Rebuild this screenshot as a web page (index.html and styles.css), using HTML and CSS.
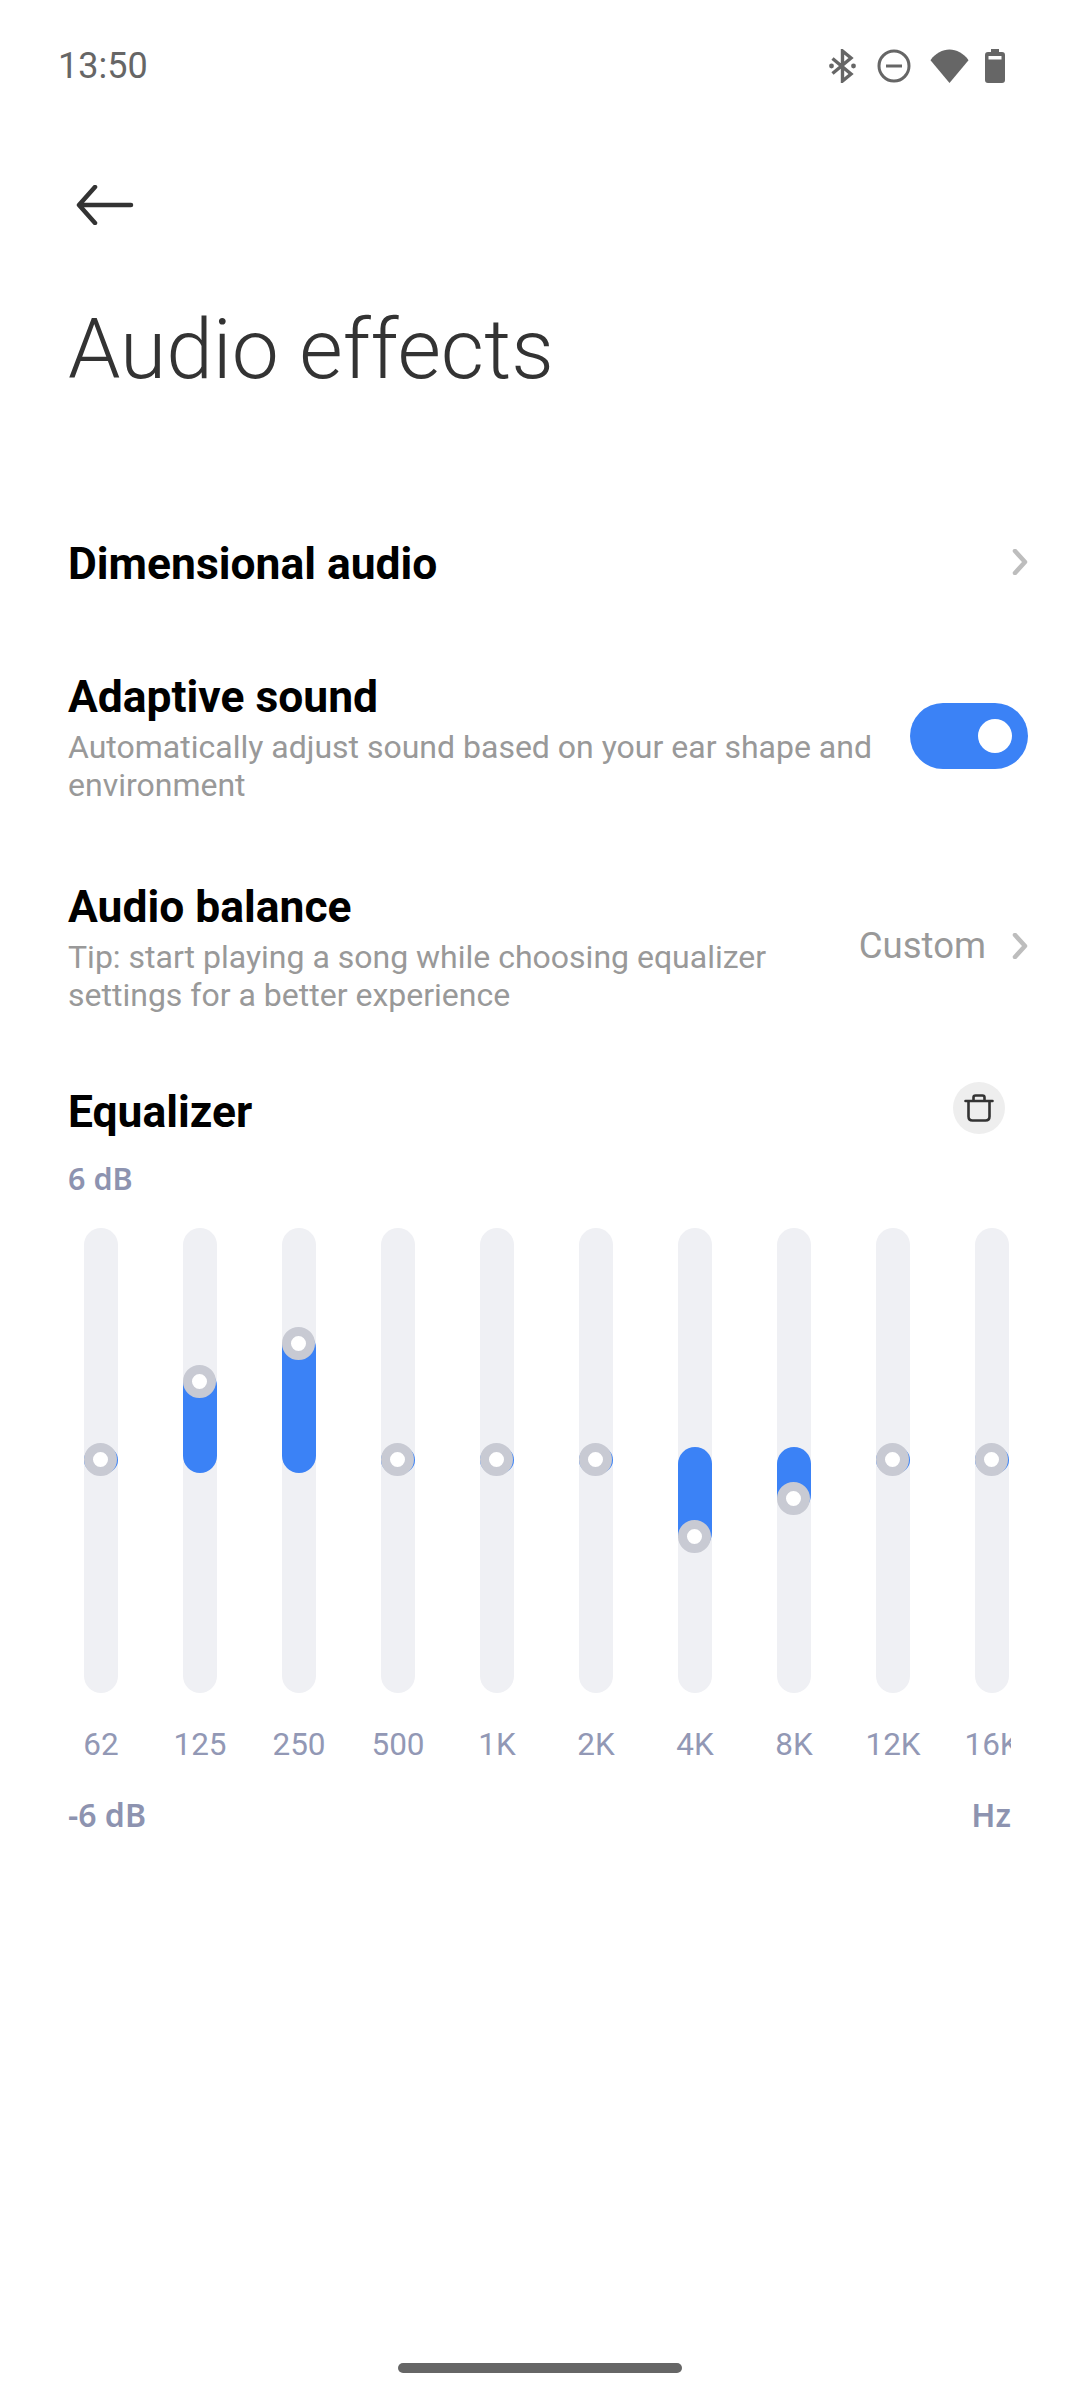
FILE: index.html
```html
<!DOCTYPE html>
<html lang="en">
<head>
    <meta charset="UTF-8">
    <meta name="viewport" content="width=device-width, initial-scale=1.0">
    <title>Audio effects</title>
    <link rel="stylesheet" href="styles.css">
</head>
<body>
    <div class="phone">
        <div class="status-bar">
            <span class="time">13:50</span>
            <div class="status-icons">
                <svg class="icon-bt" width="27" height="34" viewBox="0 0 27 34" fill="none" stroke="#666" stroke-width="3.4"><path d="M3.5 9.5 L22 25 L13.5 32 V2 L22 9 L3.5 24.5"/><circle cx="2.5" cy="17" r="2.4" fill="#666" stroke="none"/><circle cx="24.5" cy="17" r="2.4" fill="#666" stroke="none"/></svg>
                <svg class="icon-dnd" width="34" height="34" viewBox="0 0 34 34" fill="none" stroke="#666" stroke-width="3"><circle cx="17" cy="17" r="15"/><path d="M9 17 H25"/></svg>
                <svg width="39" height="36" viewBox="0 0 40 36" fill="#666"><path d="M0.5 12 C11 -2.5 29 -2.5 39.5 12 L20 35.5 Z"/></svg>
                <svg width="20" height="34" viewBox="0 0 20 34" fill="#666"><path d="M6 0 H14 V3 H17 Q20 3 20 6 V31 Q20 34 17 34 H3 Q0 34 0 31 V6 Q0 3 3 3 H6 Z M3.5 7 V10.5 H16.5 V7 Z" fill-rule="evenodd"/></svg>
            </div>
        </div>

        <div class="back-row">
            <svg width="58" height="40" viewBox="0 0 58 40" fill="none" stroke="#333" stroke-width="4.5" stroke-linecap="round" stroke-linejoin="round"><path d="M55 20 H4 M19 2 L3 20 L19 38"/></svg>
        </div>

        <h1>Audio effects</h1>

        <div class="row row-single">
            <div class="row-text">
                <h2>Dimensional audio</h2>
            </div>
            <svg class="chevron" width="16" height="26" viewBox="0 0 16 26" fill="none" stroke="#bdbdbd" stroke-width="4.5" stroke-linecap="round" stroke-linejoin="round"><path d="M3 2 L13 13 L3 24"/></svg>
        </div>

        <div class="row row-adaptive">
            <div class="row-text">
                <h2>Adaptive sound</h2>
                <p>Automatically adjust sound based on your ear shape and environment</p>
            </div>
            <div class="toggle"><span class="toggle-knob"></span></div>
        </div>

        <div class="row row-balance">
            <div class="row-text">
                <h2>Audio balance</h2>
                <p>Tip: start playing a song while choosing equalizer settings for a better experience</p>
            </div>
            <span class="row-value">Custom</span>
            <svg class="chevron" width="16" height="26" viewBox="0 0 16 26" fill="none" stroke="#bdbdbd" stroke-width="4.5" stroke-linecap="round" stroke-linejoin="round"><path d="M3 2 L13 13 L3 24"/></svg>
        </div>

        <div class="eq-head">
            <h2>Equalizer</h2>
            <div class="trash">
                <svg width="30" height="28" viewBox="0 0 30 28" fill="none" stroke="#333" stroke-width="2.6" stroke-linecap="round" stroke-linejoin="round"><path d="M1.5 7 H28.5 M9.5 7 V3.5 Q9.5 1.5 11.5 1.5 H18.5 Q20.5 1.5 20.5 3.5 V7 M4.5 7 V22.5 Q4.5 26.5 8.5 26.5 H21.5 Q25.5 26.5 25.5 22.5 V7"/></svg>
            </div>
        </div>

        <div class="db-label">6 dB</div>

        <div class="eq-bands">
            <div class="track"><div class="fill" style="top:219px;height:26px"></div><div class="knob" style="top:232px"></div></div>
            <div class="track"><div class="fill" style="top:141px;height:104px"></div><div class="knob" style="top:154px"></div></div>
            <div class="track"><div class="fill" style="top:103px;height:142px"></div><div class="knob" style="top:116px"></div></div>
            <div class="track"><div class="fill" style="top:219px;height:26px"></div><div class="knob" style="top:232px"></div></div>
            <div class="track"><div class="fill" style="top:219px;height:26px"></div><div class="knob" style="top:232px"></div></div>
            <div class="track"><div class="fill" style="top:219px;height:26px"></div><div class="knob" style="top:232px"></div></div>
            <div class="track"><div class="fill" style="top:219px;height:103px"></div><div class="knob" style="top:309px"></div></div>
            <div class="track"><div class="fill" style="top:219px;height:65px"></div><div class="knob" style="top:271px"></div></div>
            <div class="track"><div class="fill" style="top:219px;height:26px"></div><div class="knob" style="top:232px"></div></div>
            <div class="track"><div class="fill" style="top:219px;height:26px"></div><div class="knob" style="top:232px"></div></div>
        </div>

        <div class="eq-labels">
            <span>62</span>
            <span>125</span>
            <span>250</span>
            <span>500</span>
            <span>1K</span>
            <span>2K</span>
            <span>4K</span>
            <span>8K</span>
            <span>12K</span>
            <span>16K</span>
        </div>

        <div class="eq-foot">
            <span>-6 dB</span>
            <span>Hz</span>
        </div>

        <div class="home-bar"></div>
    </div>
</body>
</html>
```

FILE: styles.css
```css
* {
    margin: 0;
    padding: 0;
    box-sizing: border-box;
}

body {
    font-family: Roboto, sans-serif;
    background-color: #fff;
}

.phone {
    width: 1080px;
    height: 2400px;
    display: flex;
    flex-direction: column;
    overflow: hidden;
}

.status-bar {
    height: 34px;
    margin-top: 49px;
    padding: 0 75px 0 58px;
    display: flex;
    justify-content: space-between;
    align-items: center;
}

.time {
    font-size: 36px;
    color: #666;
}

.status-icons {
    display: flex;
    align-items: center;
    gap: 16px;
}

.icon-bt {
    margin-right: 5px;
}

.icon-dnd {
    margin-right: 3px;
}

.back-row {
    margin-top: 102px;
    padding-left: 76px;
    height: 40px;
    display: flex;
}

h1 {
    margin-top: 75px;
    padding-left: 68px;
    font-size: 84px;
    font-weight: 300;
    line-height: 100px;
    color: #333;
}

h2 {
    font-size: 44.4px;
    font-weight: 700;
    line-height: 50px;
    color: #000;
}

.row {
    display: flex;
    align-items: center;
    padding: 0 52px 0 68px;
}

.row-text {
    flex: 1;
}

.row-text p {
    margin-top: 6px;
    font-size: 32px;
    line-height: 38px;
    color: #999;
}

.row-single {
    margin-top: 139px;
}

.row-adaptive {
    margin-top: 83px;
}

.row-adaptive p {
    width: 830px;
}

.row-balance {
    margin-top: 78px;
}

.row-balance p {
    width: 760px;
}

.row-value {
    font-size: 36.5px;
    color: #999;
    margin: 0 26px 5px 0;
}

.chevron {
    margin-bottom: 5px;
}

.toggle {
    width: 118px;
    height: 66px;
    margin-bottom: 5px;
    border-radius: 33px;
    background-color: #3b82f6;
    display: flex;
    align-items: center;
    justify-content: flex-end;
    padding-right: 16px;
}

.toggle-knob {
    width: 34px;
    height: 34px;
    border-radius: 50%;
    background-color: #fff;
}

.eq-head {
    margin-top: 68px;
    padding: 0 75px 0 68px;
    display: flex;
    justify-content: space-between;
    align-items: flex-start;
}

.eq-head h2 {
    margin-top: 5px;
}

.trash {
    width: 52px;
    height: 52px;
    border-radius: 50%;
    background-color: #eee;
    display: flex;
    align-items: center;
    justify-content: center;
}

.db-label {
    margin-top: 21px;
    padding-left: 68px;
    font-family: "Noto Sans", sans-serif;
    font-size: 30.5px;
    font-weight: 600;
    line-height: 40px;
    color: #8d93b0;
}

.eq-bands {
    margin: 30px 0 0 84px;
    display: grid;
    grid-template-columns: repeat(10, 34px);
    column-gap: 65px;
}

.track {
    position: relative;
    height: 465px;
    border-radius: 17px;
    background-color: #eff0f4;
}

.fill {
    position: absolute;
    left: 0;
    width: 34px;
    border-radius: 17px;
    background-color: #3b82f6;
}

.knob {
    position: absolute;
    left: 0;
    width: 33px;
    height: 33px;
    margin-top: -17px;
    border-radius: 50%;
    border: 9px solid #c8cad3;
    background-color: #fff;
}

.eq-labels {
    width: 927px;
    margin: 30px 0 0 84px;
    display: grid;
    grid-template-columns: repeat(10, 34px);
    column-gap: 65px;
    overflow: hidden;
    font-size: 31.5px;
    line-height: 44px;
    color: #9298b5;
}

.eq-labels span {
    justify-self: center;
    white-space: nowrap;
}

.eq-foot {
    margin-top: 28px;
    padding: 0 69px 0 68px;
    display: flex;
    justify-content: space-between;
    font-family: "Noto Sans", sans-serif;
    font-size: 32px;
    font-weight: 600;
    line-height: 40px;
    color: #8d93b0;
}

.home-bar {
    width: 284px;
    height: 10px;
    margin: auto auto 27px;
    border-radius: 5px;
    background-color: #666;
}
```
